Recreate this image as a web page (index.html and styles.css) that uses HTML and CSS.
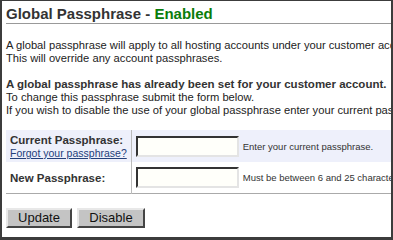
FILE: index.html
```html
<!DOCTYPE html>
<html lang="en">
<head>
    <meta charset="UTF-8">
    <title>Global Passphrase</title>
    <link rel="stylesheet" href="styles.css">
</head>
<body>
<div class="frame">
    <h1 class="title">Global Passphrase - <span class="enabled">Enabled</span></h1>

    <p class="intro first">A global passphrase will apply to all hosting accounts under your customer account.<br>
        This will override any account passphrases.</p>

    <p class="intro">
        <b>A global passphrase has already been set for your customer account.</b><br>
        To change this passphrase submit the form below.<br>
        If you wish to disable the use of your global passphrase enter your current passphrase.
    </p>

    <table class="passForm">
        <tr class="shade">
            <th>
                Current Passphrase:<br>
                <a href="#">Forgot your passphrase?</a>
            </th>
            <td class="field"><input type="password"></td>
            <td class="hint">Enter your current passphrase.</td>
        </tr>
        <tr>
            <th>New Passphrase:</th>
            <td class="field"><input type="password"></td>
            <td class="hint">Must be between 6 and 25 characters long.</td>
        </tr>
    </table>

    <div class="buttons">
        <button type="button">Update</button>
        <button type="button">Disable</button>
    </div>
</div>
</body>
</html>
```

FILE: styles.css
```css
* {
    margin: 0;
    padding: 0;
}

body {
    font-family: "Liberation Sans", Arial, sans-serif;
    color: #222;
    background-color: #fff;
}

.frame {
    width: 393px;
    height: 240px;
    box-sizing: border-box;
    border: 2px solid #3c3c3c;
    border-top-width: 1px;
    border-bottom-width: 3px;
    padding: 0 0 0 4px;
    overflow: hidden;
}

.title {
    font: bold 15px/18px "Liberation Sans", Arial, sans-serif;
    color: #333;
    padding-top: 4px;
    border-bottom: 1px solid #999;
    width: 500px;
    white-space: nowrap;
}

.enabled {
    color: #0a7d0a;
}

.intro {
    font-size: 11.2px;
    line-height: 13px;
    white-space: nowrap;
    margin-top: 13px;
}

.intro.first {
    margin-top: 15px;
}

.intro b {
    font-size: 11.5px;
    color: #333;
}

.passForm {
    border-collapse: collapse;
    margin-top: 13px;
    width: 500px;
    border-bottom: 1px solid #aaa;
}

.passForm th {
    width: 116px;
    text-align: left;
    padding: 3px 4px 1px 4px;
    font-size: 11.5px;
    line-height: 13px;
    color: #333;
    border-right: 1px solid #bbb;
    white-space: nowrap;
}

.passForm th a {
    font-weight: normal;
    font-size: 10.5px;
    color: #24407a;
}

.shade {
    background-color: #eef0fb;
}

.passForm tr {
    height: 32px;
}

.passForm tr + tr {
    height: 31px;
}

.field {
    width: 103px;
    padding: 0 4px;
}

.field input {
    display: block;
    width: 103px;
    height: 21px;
    box-sizing: border-box;
    border: 2px solid;
    border-color: #333 #e4e4e4 #e4e4e4 #333;
    background-color: #fffffa;
}

.hint {
    font-size: 9.5px;
    white-space: nowrap;
    color: #333;
}

.buttons {
    display: flex;
    gap: 5px;
    padding-top: 14px;
}

.buttons button {
    width: 66px;
    height: 20px;
    font: 13px "Liberation Sans", Arial, sans-serif;
    color: #111;
    background-color: #c4c4c4;
    border: 2px solid;
    border-color: #e8e8e8 #444 #444 #e8e8e8;
}

.buttons button + button {
    width: 68px;
}
```
